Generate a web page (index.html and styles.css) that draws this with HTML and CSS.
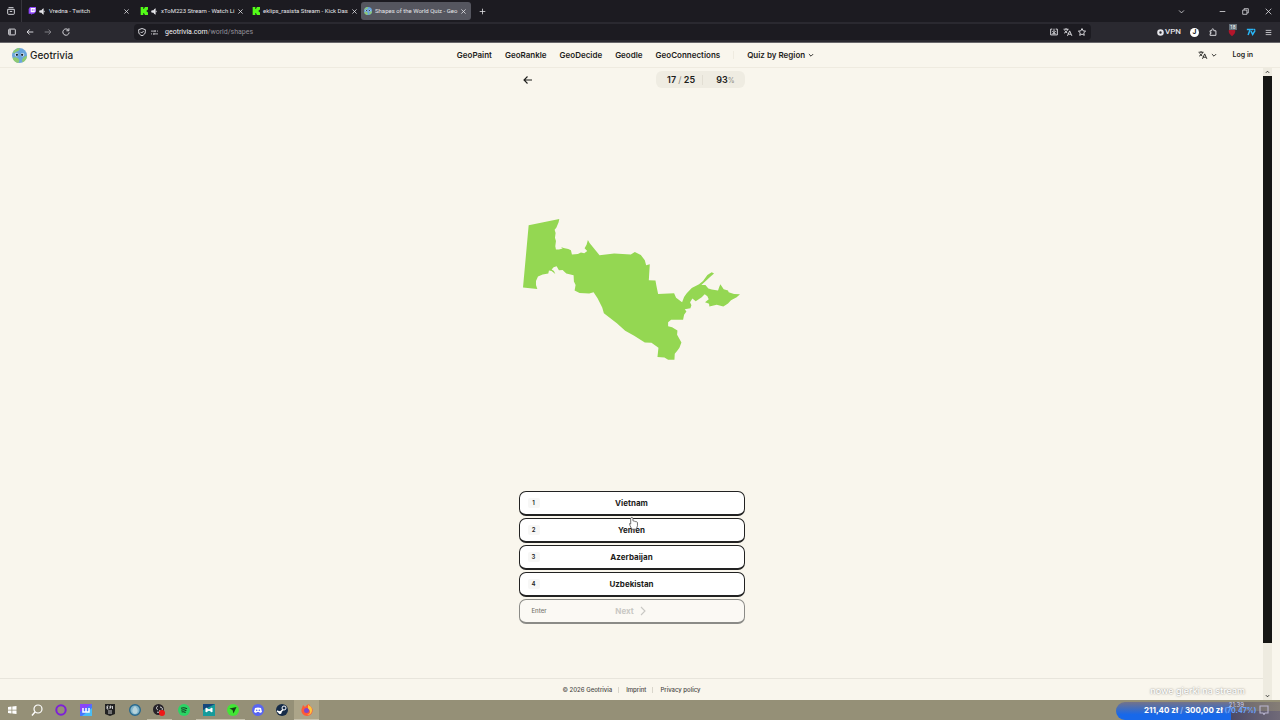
FILE: index.html
```html
<!DOCTYPE html>
<html lang="en">
<head>
  <meta charset="UTF-8">
  <title>Shapes of the World Quiz - Geotrivia</title>
  <link rel="stylesheet" href="styles.css">
</head>
<body>
  <!-- shared icons -->
  <svg class="sprite" width="0" height="0">
    <symbol id="i-close" viewBox="0 0 10 10"><path d="M2 2l6 6M8 2l-6 6"/></symbol>
    <symbol id="i-sound" viewBox="0 0 10 10"><path d="M1 4h2l3-3v8L3 6H1z" fill="currentColor"/><path d="M7.500 4v2"/></symbol>
    <symbol id="i-down" viewBox="0 0 10 10"><path d="M1.500 3.500L5 7l3.500-3.500"/></symbol>
    <symbol id="i-kick" viewBox="0 0 12 12"><path d="M1 0h4v3h1V2h1V0h5v4h-1v1h-1v2h1v1h1v4H7v-2H6V9H5v3H1z" fill="#53fc18"/></symbol>
    <symbol id="i-lang" viewBox="0 0 18 16"><path d="M1 3h9M5.500 1v2M8.500 3C8 6 5 9 2 10M3 5c1 2 3 4 5 5M8 15l4-9 4 9M9.500 12h5" stroke-width="1.600"/></symbol>
    <symbol id="i-globe" viewBox="0 0 20 20">
      <circle cx="10" cy="10" r="10" fill="#6aa5dc"/>
      <path d="M1 6C3 2 7 0 10 0c1 2-1 4-4 5S3 8 1 6zM1 13c4-2 7 0 8 2s1 4-1 5c-4-1-7-4-7-7zM15 13c2-2 4-3 5-2 0 4-3 7-6 8-1-2-1-4 1-6z" fill="#8fca72"/>
      <circle cx="6" cy="9" r="2.400" fill="#d5e6f4"/><circle cx="14" cy="9" r="2.400" fill="#d5e6f4"/>
      <circle cx="6.500" cy="9" r="1.500" fill="#15202b"/><circle cx="13.500" cy="9" r="1.500" fill="#15202b"/>
    </symbol>
  </svg>

  <div class="tabstrip">
    <button class="icon-btn tab-overview" aria-label="Firefox View"><svg class="icon" viewBox="0 0 12 12"><path d="M3 2h6M2 4h8v5a1 1 0 0 1-1 1H3a1 1 0 0 1-1-1zM4.500 6.500h3"/></svg></button>
    <div class="tab">
      <svg class="favicon" viewBox="0 0 12 12"><path d="M3 0h9v7l-3 3H7l-2 2V10H1V3z" fill="#9146ff"/><path d="M4 1.500h7v5L9.500 8H4z" fill="#fff"/><path d="M6.500 3v3M9 3v3" stroke="#9146ff"/></svg>
      <svg class="icon small"><use href="#i-sound"/></svg>
      <span class="tab-title">Vredna - Twitch</span>
      <button class="icon-btn" aria-label="Close tab"><svg class="icon small"><use href="#i-close"/></svg></button>
    </div>
    <div class="tab">
      <svg class="favicon"><use href="#i-kick"/></svg>
      <svg class="icon small"><use href="#i-sound"/></svg>
      <span class="tab-title">xToM223 Stream - Watch Li</span>
      <button class="icon-btn" aria-label="Close tab"><svg class="icon small"><use href="#i-close"/></svg></button>
    </div>
    <div class="tab">
      <svg class="favicon"><use href="#i-kick"/></svg>
      <span class="tab-title">eklips_rasista Stream - Kick Das</span>
      <button class="icon-btn" aria-label="Close tab"><svg class="icon small"><use href="#i-close"/></svg></button>
    </div>
    <div class="tab active">
      <svg class="favicon"><use href="#i-globe"/></svg>
      <span class="tab-title">Shapes of the World Quiz - Geo</span>
      <button class="icon-btn" aria-label="Close tab"><svg class="icon small"><use href="#i-close"/></svg></button>
    </div>
    <button class="icon-btn new-tab" aria-label="New tab"><svg class="icon small" viewBox="0 0 10 10"><path d="M5 1v8M1 5h8"/></svg></button>
    <div class="window-controls">
      <button class="icon-btn tabs-list" aria-label="List all tabs"><svg class="icon small"><use href="#i-down"/></svg></button>
      <button class="icon-btn" aria-label="Minimize"><svg class="icon small" viewBox="0 0 10 10"><path d="M1 5h8"/></svg></button>
      <button class="icon-btn" aria-label="Restore"><svg class="icon small" viewBox="0 0 10 10"><path d="M1 3h6v6H1zM3 3V1h6v6H7"/></svg></button>
      <button class="icon-btn" aria-label="Close"><svg class="icon small" viewBox="0 0 10 10"><path d="M1 1l8 8M9 1L1 9"/></svg></button>
    </div>
  </div>

  <div class="toolbar">
    <div class="nav-buttons">
      <button class="icon-btn" aria-label="Sidebar"><svg class="icon" viewBox="0 0 12 12"><rect x="2" y="2.500" width="8" height="7" rx="1"/><path d="M3.700 3v6" stroke-width="1.500"/></svg></button>
      <button class="icon-btn" aria-label="Back"><svg class="icon" viewBox="0 0 12 12"><path d="M10 6H2.500M5.500 3l-3 3 3 3"/></svg></button>
      <button class="icon-btn dim" aria-label="Forward"><svg class="icon" viewBox="0 0 12 12"><path d="M2 6h7.500M6.500 3l3 3-3 3"/></svg></button>
      <button class="icon-btn" aria-label="Reload"><svg class="icon" viewBox="0 0 12 12"><path d="M9.800 6.500A3.800 3.800 0 1 1 8.800 3.500M9.500 1.500v3h-3"/></svg></button>
    </div>
    <div class="urlbar">
      <svg class="icon" viewBox="0 0 12 12"><path d="M6 1.800l4 1.400v2.500C10 8 8.500 9.500 6 10.500 3.500 9.500 2 8 2 5.700V3.200zM4.200 5.800l1.400 1.400 2.400-2.400"/></svg>
      <svg class="icon small tune" viewBox="0 0 10 10"><path d="M0 3h6M8.500 3H10M0 7h1.500M4 7h6M6 1.500v3M4 5.500v3"/></svg>
      <label for="address">geotrivia.com</label>
      <input id="address" type="text" value="/world/shapes">
      <svg class="icon" viewBox="0 0 12 12"><path d="M4 2.500H2v7h8v-7H8M6 2v4.500M4 5l2 2 2-2M4 8h4"/></svg>
      <svg class="icon"><use href="#i-lang"/></svg>
      <svg class="icon" viewBox="0 0 12 12"><path d="M6 1.800l1.300 2.800 3 .4-2.200 2 .6 3L6 8.500 3.300 10l.6-3L1.700 5l3-.4z"/></svg>
    </div>
    <div class="extensions">
      <button class="vpn"><svg class="icon small" viewBox="0 0 10 10"><circle cx="5" cy="5" r="3.200" stroke-width="3"/></svg>VPN</button>
      <button class="avatar">J</button>
      <button class="icon-btn" aria-label="Extensions"><svg class="icon" viewBox="0 0 12 12"><path d="M2.500 4.500h2c-.5-3 3-3 2.500 0h2.500v5.500h-7V8c2 .3 2-2 0-1.700z"/></svg></button>
      <button class="icon-btn blocker" aria-label="Ad blocker"><svg class="icon" viewBox="0 0 12 12"><path d="M2 4l4-1 4 1c0 3-1 5-4 7-3-2-4-4-4-7z" fill="#b3152b" stroke="none"/></svg><span class="badge">18</span></button>
      <button class="icon-btn seventv" aria-label="7TV"><svg class="icon" viewBox="0 0 12 12"><path d="M1 3h4L2.500 9.500M6 3h2.500M6 5l2 4 3-5M9 2.500l2 1" stroke="#29b6f6" stroke-width="1.800"/></svg></button>
      <button class="icon-btn" aria-label="Menu"><svg class="icon small" viewBox="0 0 10 10"><path d="M1 2h8M1 5h8M1 8h8"/></svg></button>
    </div>
  </div>

  <header class="site-header">
    <a class="brand" href="#"><svg class="brand-logo"><use href="#i-globe"/></svg>Geotrivia</a>
    <nav class="site-nav">
      <a href="#">GeoPaint</a>
      <a href="#">GeoRankle</a>
      <a href="#">GeoDecide</a>
      <a href="#">Geodle</a>
      <a href="#">GeoConnections</a>
      <span class="nav-sep"></span>
      <button class="nav-menu">Quiz by Region <svg class="icon tiny"><use href="#i-down"/></svg></button>
    </nav>
    <div class="account">
      <button class="language" aria-label="Language"><svg class="icon"><use href="#i-lang"/></svg><svg class="icon tiny"><use href="#i-down"/></svg></button>
      <a href="#">Log in</a>
    </div>
  </header>

  <div class="viewport">
    <div class="page">
      <main class="quiz">
        <div class="quiz-top">
          <button class="back" aria-label="Back"><svg class="icon" viewBox="0 0 10 10"><path d="M9 5H1M4.500 1.500L1 5l3.500 3.500"/></svg></button>
          <div class="stats">
            <span>17 <i>/</i> 25</span>
            <span class="stats-score">93<i>%</i></span>
          </div>
        </div>
        <div class="shape">
          <svg viewBox="38 42 652 424">
            <path fill="#94d752" d="M55,61 L147,42 L145,52 L138,68 L133,74 L136,84 L134,98 L137,108 L135,124 L137,134 L146,134 L157,131 L152,126 L160,129 L174,132 L182,136 L185,149 L203,147 L212,143 L222,145 L231,138 L223,130 L229,119 L233,105 L238,114 L268,151 L312,146 L362,149 L374,141 L392,150 L404,166 L408,181 L419,178 L416,226 L436,227 L439,243 L444,267 L492,265 L498,279 L516,292 L522,276 L530,265 L545,249 L567,238 L579,228 L592,210 L605,202 L612,206 L600,216 L574,240 L586,240 L595,251 L605,254 L624,257 L627,248 L631,238 L641,253 L654,257 L656,262 L672,267 L690,268 L680,277 L663,286 L654,296 L640,305 L620,300 L598,305 L597,297 L585,292 L596,283 L592,274 L584,268 L575,277 L557,289 L547,281 L540,292 L544,301 L541,310 L524,313 L529,320 L522,330 L519,345 L483,345 L474,352 L474,364 L486,367 L502,377 L501,390 L514,413 L508,429 L502,437 L494,447 L493,465 L474,465 L463,458 L442,457 L445,429 L424,414 L404,413 L372,393 L345,378 L320,355 L281,325 L276,308 L262,280 L250,262 L237,266 L208,264 L193,257 L196,240 L191,230 L190,211 L168,206 L157,195 L146,196 L139,184 L130,187 L124,194 L131,198 L135,207 L124,198 L116,197 L114,206 L97,209 L83,215 L77,228 L77,240 L81,252 L38,248 Z"/>
          </svg>
        </div>
        <div class="answers">
          <button class="answer"><kbd>1</kbd>Vietnam</button>
          <button class="answer"><kbd>2</kbd>Yemen</button>
          <button class="answer"><kbd>3</kbd>Azerbaijan</button>
          <button class="answer"><kbd>4</kbd>Uzbekistan</button>
          <button class="answer next" disabled><kbd>Enter</kbd>Next <svg class="icon" viewBox="0 0 10 10"><path d="M3 1l4 4-4 4"/></svg></button>
          <svg class="cursor" viewBox="0 0 16 24"><path d="M5 2c-1 0-2 1-2 2v10l-2-1c-1 1 0 2 1 4l3 6h8l2-6v-6c-1-2-2-1-3-1-1-2-2-1-3-1-1-1-2-1-2-1V4c0-1-1-2-2-2z" fill="#fff" stroke="#555" stroke-width="1.500"/></svg>
        </div>
      </main>
      <footer class="site-footer">
        <span>© 2026 Geotrivia</span>
        <a href="#">Imprint</a>
        <a href="#">Privacy policy</a>
      </footer>
    </div>
    <div class="scrollbar">
      <svg class="icon" viewBox="0 0 10 10"><path d="M3 6l2-2 2 2"/></svg>
      <div class="scroll-track"><div class="scroll-thumb"></div></div>
      <svg class="icon" viewBox="0 0 10 10"><path d="M3 4l2 2 2-2"/></svg>
    </div>
  </div>

  <div class="taskbar">
    <div class="apps">
      <button aria-label="Start"><svg viewBox="0 0 12 12"><path d="M2 3l3.500-.5v3.200H2zM6.300 2.400L10.500 2v3.700H6.300zM2 6.400h3.500v3.200L2 9zM6.300 6.400h4.200V10l-4.200-.5z" fill="#fff"/></svg></button>
      <button aria-label="Search"><svg viewBox="0 0 12 12"><circle cx="7" cy="5" r="4" fill="none" stroke="#fff" stroke-width="1.200"/><path d="M4 8l-3 3.500" stroke="#fff" stroke-width="1.400"/></svg></button>
      <button aria-label="Browser"><svg viewBox="0 0 12 12"><circle cx="6" cy="6" r="4.700" fill="none" stroke="#7d20d8" stroke-width="2"/></svg></button>
      <button aria-label="Wave"><svg viewBox="0 0 12 12"><rect width="12" height="12" fill="#4776ff"/><path d="M0 0h12L0 8z" fill="#8a45fa"/><path d="M12 4v8H2z" fill="#49bdf5"/><path d="M3 4v4h6V4M6 4v4" fill="none" stroke="#fff" stroke-width="1.500"/></svg></button>
      <button aria-label="Epic Games"><svg viewBox="0 0 12 12"><path d="M1 0h10v10l-5 2-5-2z" fill="#222"/><path d="M3 2v3M3 2h1.500M3 3.500h1M3 5h1.500M6 5V2h1v1.500H6M8.500 2v3M4 7h4M4 9h4" stroke="#eee" stroke-width=".8" fill="none"/></svg></button>
      <button aria-label="Browser"><svg viewBox="0 0 12 12"><circle cx="6" cy="6" r="5.300" fill="#82b5ca" stroke="#28688d" stroke-width="1.400"/><path d="M6 2c4 4 3 7 0 8-3-1-4-4 0-8z" fill="#b7d3db"/></svg></button>
      <button class="running" aria-label="OBS Studio"><svg viewBox="0 0 12 12"><circle cx="5.500" cy="5.500" r="5.500" fill="#262329"/><path d="M5 2c-2 1-2 3 0 4M7 3c2 0 3 2 2 3M4 8c1 1 3 0 3-2" fill="none" stroke="#ddd"/><circle cx="9" cy="9" r="3" fill="#ef1717"/></svg></button>
      <button aria-label="Spotify"><svg viewBox="0 0 12 12"><circle cx="6" cy="6" r="6" fill="#2bd465"/><path d="M3 4.200q3-1 6 .5M3.300 6.200q2.500-1 5 .5M3.600 8q2-.6 4 .4" fill="none" stroke="#163d22" stroke-width="1.100"/></svg></button>
      <button class="running" aria-label="Video editor"><svg viewBox="0 0 12 12"><rect width="12" height="12" fill="#15467c"/><path d="M0 12V6l12-6v12z" fill="#159b9b"/><path d="M3 4l3 2-3 2zM9 4L6 6l3 2z" fill="#fff" stroke="#fff"/></svg></button>
      <button class="running" aria-label="Launcher"><svg viewBox="0 0 12 12"><circle cx="6" cy="6" r="6" fill="#42e635"/><path d="M2.500 4.500l7-1.500-3 6.500-1-3.500z" fill="#174316"/></svg></button>
      <button aria-label="Discord"><svg viewBox="0 0 12 12"><circle cx="6" cy="6" r="6" fill="#5865f2"/><path d="M3 4q3-1 6 0l1 4-2 1-1-1H5L4 9 2 8z" fill="#fff"/><circle cx="4.700" cy="6.200" r=".8" fill="#5865f2"/><circle cx="7.300" cy="6.200" r=".8" fill="#5865f2"/></svg></button>
      <button aria-label="Steam"><svg viewBox="0 0 12 12"><circle cx="6" cy="6" r="6" fill="#152b48"/><path d="M1 7l3 1.500L7.500 5" stroke="#fff" stroke-width="1.500" fill="none"/><circle cx="8" cy="4" r="2" fill="#152b48" stroke="#fff"/><circle cx="4" cy="8.500" r="1.600" fill="#fff"/></svg></button>
      <button class="running focused" aria-label="Firefox"><svg viewBox="0 0 12 12"><path d="M6 1c3-2 2 1 5 3 2 4-1 8-5 8S-1 8 1 4l1-3 2 2z" fill="#ff5a36"/><path d="M7 0c0 2 4 2 4 6 0 3-2 5-5 5 4-1 4-5 1-6z" fill="#ffc93c"/><circle cx="5.500" cy="6.500" r="2.500" fill="#8048c7"/></svg></button>
    </div>
    <div class="clock"><span>21:39</span></div>
    <button class="notifications" aria-label="Notifications"><svg class="icon" viewBox="0 0 10 10"><path d="M1 1h8v7H6L5 9.500 4 8H1z"/></svg></button>
    <div class="goal">
      <span class="goal-name">nowe gierki na stream</span>
      <div class="goal-bar">211,40 zł <span class="goal-sep">/</span> 300,00 zł <span class="goal-percent">(70.47%)</span></div>
    </div>
  </div>
</body>
</html>
```

FILE: styles.css
```css
* {
  box-sizing: border-box;
}
body {
  margin: 0;
  height: 100vh;
  display: flex;
  flex-direction: column;
  overflow: hidden;
  background: #f9f6ed;
  color: #1d1d1b;
  font-family: Inter, "Open Sans", sans-serif;
  font-size: 7px;
  line-height: 10px;
}
button, input {
  font: inherit;
  color: inherit;
  background: none;
  border: 0;
  padding: 0;
  margin: 0;
}
a {
  color: inherit;
  text-decoration: none;
}
svg {
  display: block;
  flex: none;
}
.sprite {
  position: absolute;
}
.icon {
  width: 10px;
  height: 10px;
  fill: none;
  stroke: currentColor;
  stroke-width: 1.1;
}
.icon.small {
  width: 7px;
  height: 7px;
}
.icon.tiny {
  width: 6px;
  height: 6px;
  stroke-width: 1.5;
}
.icon-btn {
  display: flex;
  align-items: center;
  justify-content: center;
}

/* browser window */
.tabstrip {
  height: 22px;
  flex: none;
  display: flex;
  align-items: center;
  background: #1c1b21;
  color: #e6e6ea;
  font-family: Roboto, sans-serif;
  font-size: 6px;
}
.tab-overview {
  width: 22px;
  height: 22px;
  margin-right: 3px;
  border-right: 1px solid #37363d;
}
.tab {
  width: 112px;
  height: 18px;
  padding: 0 7px 0 3px;
  display: flex;
  align-items: center;
  gap: 3px;
  border-radius: 3px;
}
.tab.active {
  width: 110px;
  padding-right: 4px;
  background: #55565f;
}
.favicon {
  width: 8px;
  height: 8px;
}
.tab-title {
  flex: 1;
  white-space: nowrap;
}
.new-tab {
  width: 22px;
}
.window-controls {
  margin-left: auto;
  display: flex;
  gap: 16px;
  padding-right: 8px;
}
.tabs-list {
  margin-right: 18px;
}
.toolbar {
  height: 21px;
  flex: none;
  display: flex;
  align-items: center;
  background: #2a2930;
  border-bottom: 1px solid #68676b;
  color: #e6e6ea;
  font-family: Roboto, sans-serif;
}
.nav-buttons {
  width: 134px;
  padding-left: 7px;
  display: flex;
  gap: 8px;
}
.dim {
  opacity: 0.5;
}
.urlbar {
  flex: 1;
  height: 16px;
  padding: 0 4px 0 3px;
  display: flex;
  align-items: center;
  gap: 4px;
  border-radius: 4px;
  background: #1c1b21;
}
.tune {
  margin-right: 3px;
}
.urlbar label {
  color: #f4f4f6;
}
.urlbar input {
  flex: 1;
  margin-left: -4px;
  color: #918f98;
}
.extensions {
  width: 189px;
  padding-right: 8px;
  display: flex;
  align-items: center;
  justify-content: flex-end;
  gap: 9px;
}
.vpn {
  display: flex;
  align-items: center;
  gap: 1px;
  font-size: 8px;
  font-weight: 500;
}
.avatar {
  width: 9px;
  height: 9px;
  border-radius: 50%;
  background: #fff;
  color: #1c1b21;
  font-weight: 700;
  line-height: 9px;
}
.blocker {
  position: relative;
}
.badge {
  position: absolute;
  top: -3px;
  left: 2px;
  padding: 0 1px;
  background: #65717a;
  color: #fff;
  font-size: 5px;
  line-height: 6px;
}

/* site header */
.site-header {
  height: 25px;
  flex: none;
  display: grid;
  grid-template-columns: 1fr auto 1fr;
  align-items: center;
  padding: 0 27px 0 12px;
  border-bottom: 1px solid #efebe0;
  font-weight: 600;
}
.brand {
  display: flex;
  align-items: center;
  gap: 3px;
  font-size: 10px;
  font-weight: 500;
}
.brand-logo {
  width: 15px;
  height: 15px;
}
.site-nav {
  display: flex;
  align-items: center;
  gap: 13px;
  padding-left: 6px;
  font-size: 8px;
}
.nav-sep {
  width: 1px;
  height: 8px;
  background: #efebe0;
}
.nav-menu, .language {
  display: flex;
  align-items: center;
  gap: 3px;
}
.account {
  display: flex;
  justify-content: flex-end;
  gap: 16px;
}

/* quiz page */
.viewport {
  flex: 1;
  min-height: 0;
  display: flex;
  padding-right: 8px;
}
.page {
  flex: 1;
  display: flex;
  flex-direction: column;
}
.quiz {
  flex: 1;
  width: 226px;
  margin: 0 auto;
  padding: 3px 0 54px;
  display: flex;
  flex-direction: column;
}
.quiz-top {
  display: flex;
  align-items: center;
  justify-content: space-between;
  padding-left: 4px;
}
.stats {
  height: 17px;
  padding: 0 10px 0 11px;
  display: flex;
  align-items: center;
  border-radius: 6px;
  background: #efece2;
  font-size: 9px;
  font-weight: 600;
}
.stats i {
  font-style: normal;
  font-weight: 400;
  line-height: 1;
  color: #8d8a80;
}
.stats-score {
  margin-left: 7px;
  padding-left: 13px;
  border-left: 1px solid #e2ded3;
}
.stats-score i {
  font-size: 7px;
}
.shape {
  flex: 1;
  display: flex;
  align-items: center;
  justify-content: center;
}
.shape svg {
  width: 217px;
}
.answers {
  position: relative;
  display: flex;
  flex-direction: column;
  gap: 2px;
}
.answer {
  position: relative;
  height: 25px;
  display: flex;
  align-items: center;
  justify-content: center;
  gap: 4px;
  border: 1px solid #222;
  border-bottom-width: 2px;
  border-radius: 7px;
  background: #fff;
  font-size: 8px;
  font-weight: 700;
}
.answer kbd {
  position: absolute;
  left: 8px;
  min-width: 12px;
  padding: 0 4px;
  border-radius: 2px;
  background: #f7f7f6;
  font-family: inherit;
  font-size: 6px;
  font-weight: 600;
}
.next {
  border-color: #8b8b87;
  background: #fbf9f4;
  color: #c9c8c4;
}
.next kbd {
  background: none;
  color: #777671;
  font-weight: 500;
}
.cursor {
  position: absolute;
  top: 25px;
  left: 110px;
  width: 9px;
  height: 14px;
}
.site-footer {
  height: 22px;
  display: flex;
  align-items: center;
  justify-content: center;
  border-top: 1px solid #e8e5dc;
  color: #4a4945;
  font-size: 6px;
  font-weight: 500;
}
.site-footer a {
  margin-left: 6px;
  padding-left: 7px;
  border-left: 1px solid #d9d6cc;
  line-height: 6px;
}
.scrollbar {
  width: 9px;
  display: flex;
  flex-direction: column;
  background: #eeebe0;
}
.scroll-track {
  flex: 1;
}
.scroll-thumb {
  height: 92%;
  background: #161613;
}
.scrollbar .icon {
  width: 9px;
  height: 8px;
}

/* taskbar */
.taskbar {
  position: relative;
  height: 20px;
  flex: none;
  display: flex;
  align-items: center;
  background: #959077;
  color: #fff;
}
.apps {
  width: 319px;
  display: flex;
}
.apps button {
  flex: 1;
  height: 20px;
  display: flex;
  align-items: center;
  justify-content: center;
}
.apps svg {
  width: 12px;
  height: 12px;
}
.apps .running {
  box-shadow: inset 0 -1px #c5c0ab;
}
.apps .focused {
  background: #aca589;
}
.clock {
  position: relative;
  z-index: 2;
  align-self: flex-start;
  margin-left: auto;
  margin-right: 15px;
  font-size: 6px;
  color: #c9cfee;
}
.notifications {
  position: relative;
  z-index: 2;
  margin-right: 11px;
  color: #b9b5d0;
}
.goal {
  position: absolute;
  right: 0;
  bottom: 0;
  width: 164px;
  font-weight: 700;
}
.goal-name {
  display: block;
  padding: 0 35px 6px 0;
  text-align: right;
  font-size: 9px;
  font-weight: 500;
  text-shadow: 0 0 2px #77756e;
}
.goal-bar {
  height: 18px;
  padding-left: 28px;
  border-radius: 12px 0 0 12px;
  background:
    linear-gradient(90deg, transparent 70%, #4d4a66 70%, #706a78) 0 100% / 100% 50% no-repeat,
    linear-gradient(90deg, transparent 70%, #68636c 70%, #857e76) 0 0 / 100% 50% no-repeat,
    linear-gradient(#74738a, #1768ea 70%);
  font-size: 8px;
  line-height: 17px;
  white-space: nowrap;
}
.goal-sep {
  color: #7fa8ee;
}
.goal-percent {
  color: #6ba6ff;
  font-size: 7px;
}
```
